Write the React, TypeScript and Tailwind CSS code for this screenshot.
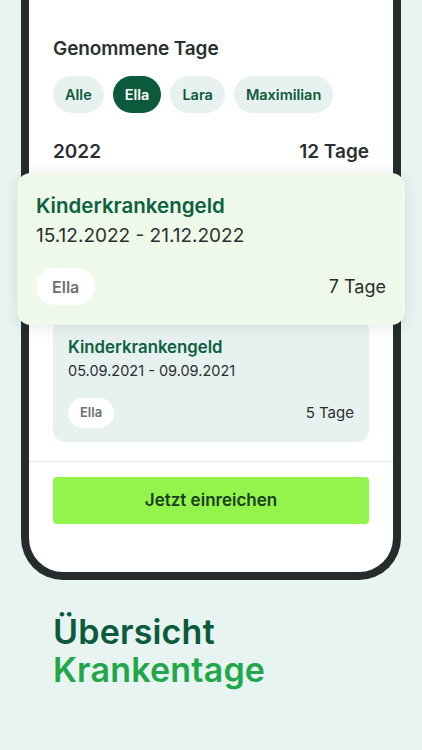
import React from "react";

const font = { fontFamily: "Inter, 'Noto Sans', sans-serif" };

export default function App() {
  const chips = ["Alle", "Ella", "Lara", "Maximilian"];
  return (
    <div className="w-[422px] h-[750px] bg-[#e7f4f1] overflow-hidden" style={font}>
      <div className="mx-[21px] h-[580px] border-x-8 border-b-8 border-[#262c2d] rounded-b-[42px] bg-white flex flex-col">
        <div className="px-[24px] pt-[38px]">
          <h2 className="text-[19px] leading-[22px] font-semibold text-[#2a2f30] tracking-[-0.1px]">Genommene Tage</h2>
          <div className="flex gap-[9px] mt-[16px]">
            {chips.map((c) => (
              <div
                key={c}
                className={
                  c === "Ella"
                    ? "h-[37px] px-[12px] rounded-full bg-[#0b5a3b] text-white text-[14.5px] font-semibold flex items-center"
                    : "h-[37px] px-[12px] rounded-full bg-[#e7f2f0] text-[#0d5a3a] text-[14.5px] font-semibold flex items-center"
                }
              >
                {c}
              </div>
            ))}
          </div>
          <div className="flex justify-between items-center mt-[27px] text-[19px] font-semibold text-[#2a2f30] leading-[24px]">
            <span>2022</span>
            <span>12 Tage</span>
          </div>
          <div className="relative z-10 -mx-[36px] mt-[9px] h-[152px] rounded-[14px] bg-[#eef9ea] shadow-[0_2px_16px_rgba(0,0,0,0.10)] px-[19px] pt-[20px] flex flex-col">
            <div className="text-[20.5px] leading-[26px] font-semibold text-[#0d6040]">Kinderkrankengeld</div>
            <div className="text-[19px] leading-[24px] text-[#2a2f30] mt-[5px]">15.12.2022 - 21.12.2022</div>
            <div className="flex justify-between items-center mt-[20px]">
              <div className="h-[37px] px-[16px] rounded-full bg-white text-[#6c7272] text-[16px] font-semibold flex items-center">Ella</div>
              <span className="text-[18px] text-[#2a2f30]">7 Tage</span>
            </div>
          </div>
          <div className="-mt-[6px] h-[123px] rounded-[12px] bg-[#e7f2f0] px-[15px] pt-[18px] flex flex-col">
            <div className="text-[16.8px] leading-[20px] font-semibold text-[#0d6040]">Kinderkrankengeld</div>
            <div className="text-[14.5px] leading-[20px] text-[#2a2f30] mt-[4px]">05.09.2021 - 09.09.2021</div>
            <div className="flex justify-between items-center mt-[17px]">
              <div className="h-[30px] px-[12px] rounded-full bg-white text-[#6c7272] text-[13px] font-semibold flex items-center">Ella</div>
              <span className="text-[15px] text-[#2a2f30]">5 Tage</span>
            </div>
          </div>
        </div>
        <div className="mt-[19px] h-px bg-[#e6e9e9]"></div>
        <div className="px-[24px] pt-[15px]">
          <div className="h-[47px] rounded-[4px] bg-[#93f54c] flex items-center justify-center text-[17px] font-semibold text-[#1b3d20]">
            Jetzt einreichen
          </div>
        </div>
      </div>
      <div className="px-[53px] pt-[33px] text-[34px] leading-[38px] font-semibold tracking-[0.2px]">
        <div className="text-[#0b5a3b]">Übersicht</div>
        <div className="text-[#22a64a]">Krankentage</div>
      </div>
    </div>
  );
}
